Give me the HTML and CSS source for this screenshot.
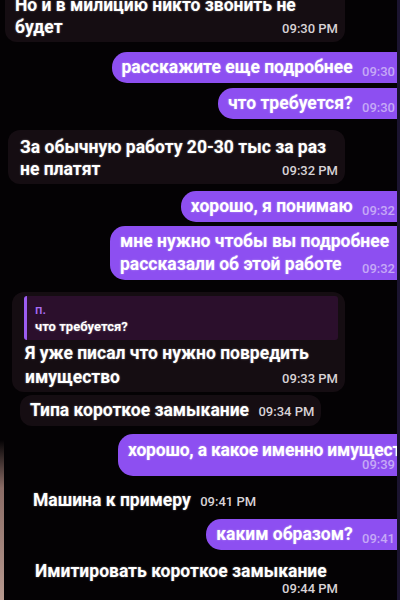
FILE: index.html
```html
<!DOCTYPE html>
<html>
<head lang="ru">
    <meta charset="UTF-8">
    <title>Чат</title>
    <link rel="stylesheet" href="styles.css">
</head>
<body>
<div class="chat">
    <!-- входящие -->
    <div class="msg in in-1">
        <div class="line">Но и в милицию никто звонить не</div>
        <div class="line row">
            <span>будет</span>
            <span class="time">09:30 PM</span>
        </div>
    </div>

    <div class="msg out out-1">
        <span>расскажите еще подробнее</span>
        <span class="time">09:30</span>
    </div>
    <div class="msg out out-2">
        <span>что требуется?</span>
        <span class="time">09:30</span>
    </div>

    <div class="msg in in-2">
        <div class="line">За обычную работу 20-30 тыс за раз</div>
        <div class="line row">
            <span>не платят</span>
            <span class="time">09:32 PM</span>
        </div>
    </div>

    <div class="msg out out-3">
        <span>хорошо, я понимаю</span>
        <span class="time">09:32</span>
    </div>
    <div class="msg out out-4">
        <div class="line">мне нужно чтобы вы подробнее</div>
        <div class="line row">
            <span>рассказали об этой работе</span>
            <span class="time">09:32</span>
        </div>
    </div>

    <div class="msg in in-3">
        <div class="quote">
            <div class="quote-name">п.</div>
            <div class="quote-text">что требуется?</div>
        </div>
        <div class="line">Я уже писал что нужно повредить</div>
        <div class="line row">
            <span>имущество</span>
            <span class="time">09:33 PM</span>
        </div>
    </div>
    <div class="msg in in-4">
        <span>Типа короткое замыкание</span>
        <span class="time">09:34 PM</span>
    </div>

    <div class="msg out out-5">
        <div class="line">хорошо, а какое именно имущество?</div>
        <div class="time">09:39</div>
    </div>

    <div class="msg in in-5">
        <span>Машина к примеру</span>
        <span class="time">09:41 PM</span>
    </div>

    <div class="msg out out-6">
        <span>каким образом?</span>
        <span class="time">09:41</span>
    </div>

    <div class="msg in in-6">
        <div class="line">Имитировать короткое замыкание</div>
        <div class="time">09:44 PM</div>
    </div>
</div>
</body>
</html>
```

FILE: styles.css
```css
html, body {
    margin: 0;
    padding: 0;
    background: #040204;
}
body {
    width: 400px;
    height: 600px;
    overflow: hidden;
    position: relative;
    font-family: Roboto, "Liberation Sans", sans-serif;
    color: #fff;
}
/* палец у края снимка */
body:before {
    content: "";
    position: absolute;
    left: 0;
    top: 440px;
    width: 4px;
    height: 160px;
    background: linear-gradient(#040204, #8a6c66 30%, #b89a90);
    z-index: 2;
}
.chat {
    display: flex;
    flex-direction: column;
    margin-top: -12px;
    border-right: 3px solid #1b1430;
    height: 620px;
    overflow: hidden;
}

/* общий пузырь */
.msg {
    font-size: 17.5px;
    font-weight: 700;
    line-height: 23px;
    white-space: nowrap;
    text-shadow: 0 0 2px rgba(255,255,255,.45);
}
.line {
    line-height: 22px;
}
.row {
    display: flex;
    justify-content: space-between;
    align-items: baseline;
}
.row .time {
    line-height: 14px;
}
.time {
    font-size: 13px;
    font-weight: 500;
    text-shadow: none;
}

/* входящие */
.msg.in {
    align-self: flex-start;
    background: #150d12;
    border-radius: 12px;
    padding: 6px 7px 4px 10px;
    box-sizing: border-box;
}
.in .time {
    color: #d8d2d6;
}

/* исходящие */
.msg.out {
    align-self: flex-end;
    background: #8d4ff1;
    border-radius: 15px 0 0 15px;
    padding: 4px 2px 3px 10px;
}
.out .time {
    color: #c5a8f6;
    margin-left: 5px;
    position: relative;
    top: 3px;
}

.msg.in-1 { margin-left: 5px; width: 340px; }
.msg.out-1 { margin-top: 10px; }
.msg.out-2 { margin-top: 5px; }
.msg.in-2 { margin-top: 11px; margin-left: 8px; width: 337px; padding-left: 12px; }
.msg.out-3 { margin-top: 7px; }
.msg.out-4 { margin-top: 4px; width: 275px; padding-bottom: 4px; }
.out-4 .line { line-height: 23px; }
.msg.in-3 { margin-top: 12px; margin-left: 12px; width: 333px; padding: 4px 7px 3px 13px; }
.in-3 .line { line-height: 24px; }
.msg.in-4 { margin-top: 3px; margin-left: 20px; padding: 4px 7px 3px 10px; }
.in-4 .time { margin-left: 5px; }
.msg.out-5 { margin-top: 8px; margin-right: -12px; width: 267px; padding: 5px 14px 4px 10px; overflow: hidden; }
.out-5 .line { line-height: 23px; letter-spacing: -0.2px; }
.out-5 .time { text-align: right; top: 0; margin-top: -4px; line-height: 14px; }
.msg.in-5 { margin-top: 9px; margin-left: 23px; padding: 4px 7px 3px 10px; background: transparent; }
.in-5 .time { margin-left: 5px; }
.msg.out-6 { margin-top: 3px; }
.msg.in-6 { margin-top: 6px; margin-left: 25px; width: 320px; padding: 4px 7px 3px 10px; background: transparent; }
.in-6 .line { line-height: 23px; }
.in-6 .time { text-align: right; margin-top: -1px; line-height: 14px; }

/* цитата */
.quote {
    background: #2b0f2c;
    border-left: 3px solid #9b5cf0;
    border-radius: 3px;
    padding: 5px 8px 5px;
    margin: 0 0 1px -1px;
    line-height: 17px;
}
.quote-name {
    color: #a86cf4;
    font-size: 13px;
    font-weight: 500;
    text-shadow: none;
}
.quote-text {
    font-size: 13px;
    font-weight: 700;
}
```
